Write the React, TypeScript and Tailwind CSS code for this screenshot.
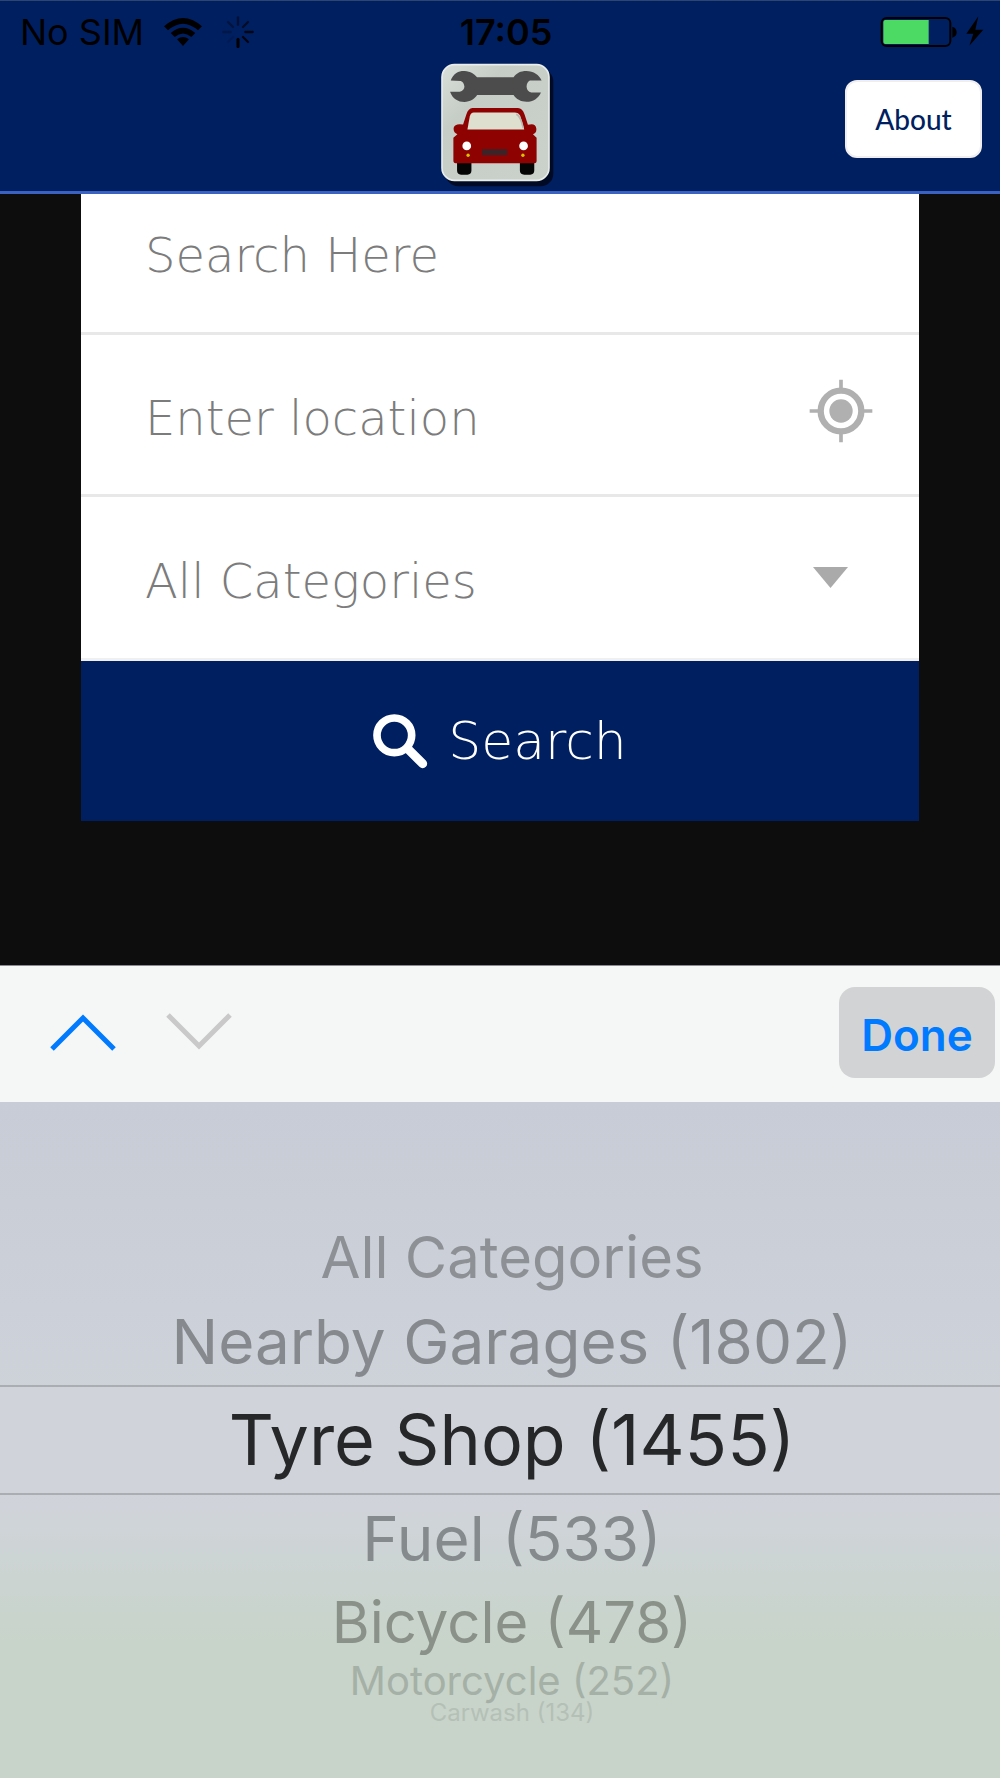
import React from 'react';

const CATEGORIES = [
  { name: 'All Categories', row: 'h-[84px] text-[58px] text-[#8d9095]' },
  { name: 'Nearby Garages (1802)', row: 'h-[86px] text-[62px] text-[#86898e]' },
  { name: 'Tyre Shop (1455)', row: 'h-[110px] text-[70px] text-[#262728] border-y-2 border-[#aaadb1] bg-[#d0d4da]' },
  { name: 'Fuel (533)', row: 'h-[88px] text-[62px] text-[#858a8c]' },
  { name: 'Bicycle (478)', row: 'h-[78px] text-[58px] text-[#8a9189]' },
  { name: 'Motorcycle (252)', row: 'h-[40px] text-[40px] text-[#a5b0a6]' },
  { name: 'Carwash (134)', row: 'h-[24px] text-[24px] text-[#b4c0b6]' },
];

const Wifi = () => (
  <svg className="w-[38px] h-[28px]" viewBox="0 0 114 84" aria-hidden="true">
    <path d="M0 25Q57-25 114 25L102 37Q57-3 12 37Z" />
    <path d="M20 45Q57 13 94 45L82 57Q57 36 32 57Z" />
    <path d="M39 64Q57 50 75 64L57 84Z" />
  </svg>
);

const Spinner = () => (
  <svg className="w-8 h-8" viewBox="-48 -48 96 96" stroke="#000" strokeWidth="7" strokeLinecap="round" aria-hidden="true">
    <path d="M0 22V44" strokeWidth="9" />
    <path d="M15 15L30 30" opacity=".85" />
    <path d="M22 0H44" opacity=".8" />
    <path d="M15-15L30-30" opacity=".6" />
    <path d="M0-22V-44" opacity=".45" />
    <path d="M-15-15L-30-30" opacity=".35" />
    <path d="M-22 0H-44" opacity=".25" />
    <path d="M-15 15L-30 30" opacity=".12" />
  </svg>
);

const Battery = () => (
  <svg className="w-[104px] h-8" viewBox="0 0 312 96" aria-hidden="true">
    <rect x="5" y="6" width="206" height="84" rx="15" fill="none" stroke="#000" strokeWidth="6" />
    <path d="M16 12H146V84H16Q10 84 10 78V18Q10 12 16 12Z" fill="#4cd964" />
    <path d="M217 32Q230 36 230 49T217 65Z" />
    <path d="M295 1L259 53H280L268 89L310 41H286Z" />
  </svg>
);

const Logo = () => (
  <svg className="w-[117px] h-[127px]" viewBox="60 186 350 380" role="img" aria-label="Garage finder">
    <defs>
      <linearGradient id="plate" x1="0" y1="0" x2="1" y2="1">
        <stop offset="0" stopColor="#d9dfda" />
        <stop offset=".3" stopColor="#c5cdc6" />
        <stop offset="1" stopColor="#cbd2cc" />
      </linearGradient>
    </defs>
    <rect x="80" y="206" width="322" height="352" rx="38" fill="#000a25" />
    <rect x="69" y="194" width="320" height="346" rx="37" fill="url(#plate)" stroke="#e9ede9" strokeWidth="5" />
    <path
      d="M95 241C104 218 121 212 137 213C154 214 166 222 174 232H283C292 219 304 213 321 213C343 213 360 225 367 241H332Q322 246 322 260Q323 274 336 277H365C357 295 342 305 322 305C304 305 291 297 283 285H174C166 297 153 305 136 306C117 305 101 297 93 275H122Q136 271 136 259Q134 246 125 243Z"
      fill="#4c4c4c"
    />
    <path d="M114 480H157V511Q157 523 145 523H126Q114 523 114 511ZM302 480H345V511Q345 523 333 523H315Q302 523 302 511Z" fill="#050505" />
    <path
      d="M160 324H296Q310 325 316 343L326 374Q348 367 351 384Q353 398 341 402L352 413V483Q352 489 345 489H110Q103 489 103 481V413L115 402Q102 397 104 383Q107 369 132 373L142 342Q148 325 160 324Z"
      fill="#8f0202"
    />
    <path d="M164 337H286Q298 337 303 347L315 388H145L152 349Q155 337 164 337Z" fill="#dfdfd0" />
    <path d="M291 342Q304 347 312 384" fill="none" stroke="#b9b9b0" strokeWidth="5" />
    <circle cx="143" cy="437" r="13" fill="#fff" />
    <circle cx="313" cy="437" r="13" fill="#fff" />
    <circle cx="147" cy="465" r="5" fill="#d8c500" />
    <circle cx="311" cy="465" r="5" fill="#d8c500" />
    <rect x="189" y="447" width="75" height="18" fill="#3b2328" />
  </svg>
);

const Header: React.FC = () => (
  <header className="bg-[#001f60] border-t border-[#2e4570]">
    <div className="grid grid-cols-3 items-center h-[61px] text-4xl text-black">
      <div className="flex items-center pl-5">
        <span>No SIM</span>
        <span className="ml-5"><Wifi /></span>
        <span className="ml-5"><Spinner /></span>
      </div>
      <time className="pl-3 text-center font-semibold">17:05</time>
      <div className="flex justify-end pr-4"><Battery /></div>
    </div>
    <div className="grid grid-cols-3 items-start pb-0.5 border-b-[3px] border-[#3b62c0]">
      <div />
      <div className="flex justify-center pr-1"><Logo /></div>
      <div className="flex justify-end pt-[18px] pr-[18px]">
        <button type="button" className="w-[137px] h-[78px] rounded-xl border-2 border-[#f0eeee] bg-white font-['Lato',sans-serif] text-[28px] font-medium text-[#001f60]">
          About
        </button>
      </div>
    </div>
  </header>
);

const SearchForm: React.FC = () => (
  <form
    className="mx-[81px] bg-white font-['DejaVu_Sans',sans-serif] font-extralight text-[48px] text-[#7c7c7c]"
    onSubmit={(e) => e.preventDefault()}
  >
    <div className="h-[141px] border-b-[3px] border-[#e8e8e8]">
      <input
        type="text"
        aria-label="Search"
        placeholder="Search Here"
        className="w-full h-[122px] px-16 outline-none placeholder:text-[#7c7c7c]"
      />
    </div>
    <div className="flex items-center h-[162px] border-b-[3px] border-[#e8e8e8]">
      <input
        type="text"
        aria-label="Location"
        placeholder="Enter location"
        className="flex-1 min-w-0 h-full pt-1.5 pl-16 outline-none placeholder:text-[#7c7c7c]"
      />
      <button type="button" aria-label="Use my location" className="mr-[46px] pb-2">
        <svg className="w-16 h-16" viewBox="-96 -96 192 192" fill="none" stroke="#b0b0b0">
          <circle r="61" strokeWidth="19" />
          <circle r="35" fill="#b0b0b0" stroke="none" />
          <path d="M0-94V-68M0 68V94M-94 0H-68M68 0H94" strokeWidth="11" />
        </svg>
      </button>
    </div>
    <div className="relative h-[164px] border-b-[3px] border-[#f0f0f0]">
      <select aria-label="Category" className="w-full h-full pt-1.5 pl-16 pr-28 appearance-none outline-none">
        <option>All Categories</option>
      </select>
      <svg className="absolute right-[71px] top-[70px] w-[35px] h-[21px] pointer-events-none" viewBox="0 0 35 21" aria-hidden="true">
        <path d="M0 0H35L17.500 21Z" fill="#aaa" />
      </svg>
    </div>
    <button type="submit" className="flex items-center justify-center gap-5 w-full h-[160px] bg-[#001f60] text-[52px] text-white">
      <svg className="w-[55px] h-[55px]" viewBox="0 0 165 165" fill="none" stroke="#fff" aria-hidden="true">
        <circle cx="64" cy="64" r="52" strokeWidth="23" />
        <path d="M106 106L149 149" strokeWidth="27" strokeLinecap="round" />
      </svg>
      Search
    </button>
  </form>
);

const PickerToolbar: React.FC = () => (
  <div className="flex items-center h-[137px] bg-[#f5f7f7] border-t border-[#8a8a90] pb-1 pl-[50px] pr-[5px]">
    <button type="button" aria-label="Previous field">
      <svg className="w-[66px] h-[38px]" viewBox="0 0 66 38" fill="none" stroke="#007aff" strokeWidth="5">
        <path d="M2 36L33 5L64 36" />
      </svg>
    </button>
    <button type="button" aria-label="Next field" disabled className="ml-[50px]">
      <svg className="w-[66px] h-[38px]" viewBox="0 0 66 38" fill="none" stroke="#c9c9c9" strokeWidth="5">
        <path d="M2 2L33 33L64 2" />
      </svg>
    </button>
    <button type="button" className="ml-auto w-[156px] h-[91px] rounded-2xl bg-[#d2d3d4] pt-1.5 text-[44px] font-semibold text-[#007aff]">
      Done
    </button>
  </div>
);

const CategoryPicker: React.FC = () => (
  <div
    role="listbox"
    aria-label="Categories"
    className="flex flex-col h-[676px] pt-[113px] bg-linear-to-b from-[#c8ccd6] from-0% via-[#d0d4da] via-60% to-[#c8d4ca] to-80%"
  >
    {CATEGORIES.map(({ name, row }) => (
      <button
        key={name}
        type="button"
        role="option"
        aria-selected={name.startsWith('Tyre')}
        className={`flex shrink-0 items-center justify-center pl-6 leading-none whitespace-nowrap ${row}`}
      >
        {name}
      </button>
    ))}
  </div>
);

const App: React.FC = () => (
  <div className="w-full bg-[#0d0d0d] font-['Inter',sans-serif]">
    <Header />
    <main className="pb-36">
      <SearchForm />
    </main>
    <PickerToolbar />
    <CategoryPicker />
  </div>
);

export default App;
